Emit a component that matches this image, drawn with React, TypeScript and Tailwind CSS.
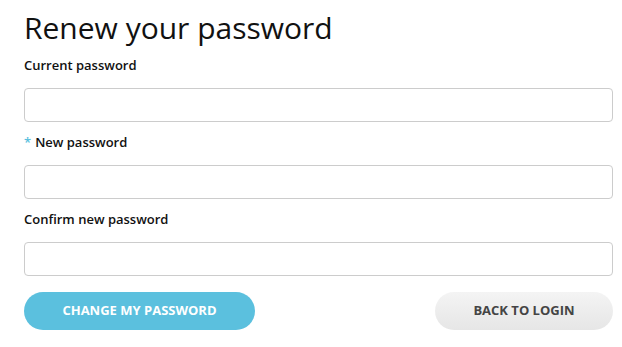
const Field = ({ label, required }: { label: string; required?: boolean }) => (
  <div className="flex flex-col">
    <label className="text-[13px] leading-[18px] font-semibold text-[#111]">
      {required && <span className="text-[#5bc0de] mr-1">*</span>}
      {label}
    </label>
    <input
      type="password"
      className="mt-[14px] h-[34px] w-full rounded-[4px] border border-[#cccccc] bg-white px-3 outline-none"
    />
  </div>
);

export default function App() {
  return (
    <div className="min-h-screen bg-white pl-6 pr-[9px] pt-[10px] font-['Open_Sans',sans-serif]">
      <h1 className="text-[30px] leading-[36px] font-normal text-[#111]">Renew your password</h1>
      <div className="mt-[10px] flex flex-col gap-[11px]">
        <Field label="Current password" />
        <Field label="New password" required />
        <Field label="Confirm new password" />
      </div>
      <div className="mt-4 flex items-center justify-between">
        <button className="h-[38px] w-[231px] rounded-full bg-[#5bc0de] text-[13px] font-bold uppercase text-white">
          Change my password
        </button>
        <button className="h-[38px] w-[178px] rounded-full bg-gradient-to-b from-[#f4f4f4] to-[#e6e6e6] text-[13px] font-bold uppercase text-[#444]">
          Back to login
        </button>
      </div>
    </div>
  );
}
